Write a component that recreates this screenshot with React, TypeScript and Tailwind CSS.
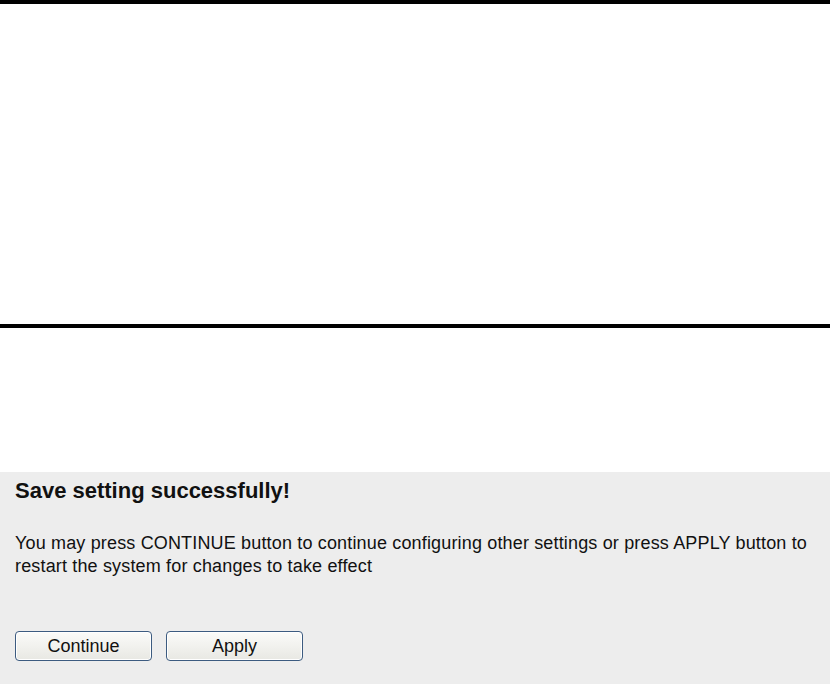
export default function App() {
  return (
    <div className="w-[830px] h-[684px] bg-white flex flex-col font-['Liberation_Sans',Arial,sans-serif] text-black">
      {/* top rule */}
      <div className="h-[4px] bg-black" />
      <div className="h-[320px]" />
      <div className="h-[4px] bg-black" />
      <div className="h-[144px]" />

      {/* result panel */}
      <div className="flex-1 bg-[#ededed] px-[15px] pt-[6px]">
        <h2 className="text-[22px] font-bold leading-[26px] text-[#111]">Save setting successfully!</h2>
        <p className="mt-[28px] text-[18px] leading-[23px] tracking-[0.16px] text-[#111]">
          You may press CONTINUE button to continue configuring other settings or press APPLY button to restart the
          system for changes to take effect
        </p>
        <div className="mt-[53px] flex gap-[14px]">
          <button className="w-[137px] h-[30px] rounded-[4px] border border-[#3c5b80] shadow-[inset_0_0_0_1px_#ffffff] bg-gradient-to-b from-[#fbfbf9] to-[#e8e8e3] text-[18px] leading-none text-[#111]">
            Continue
          </button>
          <button className="w-[137px] h-[30px] rounded-[4px] border border-[#3c5b80] shadow-[inset_0_0_0_1px_#ffffff] bg-gradient-to-b from-[#fbfbf9] to-[#e8e8e3] text-[18px] leading-none text-[#111]">
            Apply
          </button>
        </div>
      </div>
    </div>
  );
}
